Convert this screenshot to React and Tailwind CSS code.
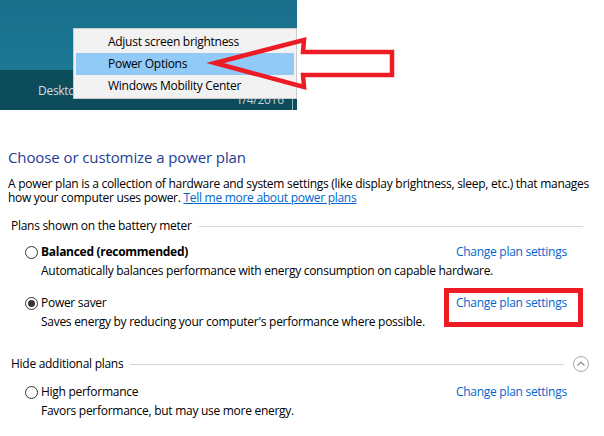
import React from "react";

const FONT = { fontFamily: '"Segoe UI", "Open Sans", "Noto Sans", sans-serif' };

/* ── Radio (Win10 look) ── */
const Radio = ({ checked = false }) => (
  <span className="flex h-[13px] w-[13px] shrink-0 items-center justify-center rounded-full border border-[#333333] bg-white">
    {checked && <span className="h-[7px] w-[7px] rounded-full bg-[#333333]" />}
  </span>
);

const LINK = "text-[#0066cc] cursor-pointer";

const SectionHeader = ({ label, width, chevron }) => (
  <div className={`flex h-[20px] items-center pl-[3px] ${width}`}>
    <span className="text-[12px] text-black">{label}</span>
    <span className="ml-[7px] h-px flex-1 bg-[#d5d5d5]" />
    {chevron && (
      <svg width="18" height="18" viewBox="0 0 18 18" className="ml-[8px]">
        <circle cx="9" cy="9" r="7.5" fill="white" stroke="#a8a8a8" strokeWidth="1" />
        <path d="M5.5 10.5 L9 7 L12.5 10.5" fill="none" stroke="#8c8c8c" strokeWidth="1.2" />
      </svg>
    )}
  </div>
);

const Plan = ({ name, bold, checked, desc, className = "" }) => (
  <div className={`pl-[17px] ${className}`}>
    <div className="flex h-[20px] items-center">
      <div className="flex w-[431px] items-center gap-[3px]">
        <Radio checked={checked} />
        <span className={`text-[12px] text-black ${bold ? "font-bold" : ""}`}>{name}</span>
      </div>
      <span className={`text-[12px] ${LINK}`}>Change plan settings</span>
    </div>
    <div className="flex h-[18px] items-center pl-[16px] text-[12px] text-black">{desc}</div>
  </div>
);

export default function App() {
  return (
    <div className="relative h-[436px] w-[604px] overflow-hidden bg-white tracking-[-0.28px]" style={FONT}>
      {/* Screenshot of the desktop context menu */}
      <div className="relative h-[110px] w-[297px] overflow-hidden">
        <div className="h-[70px] bg-gradient-to-b from-[#1a6f8b] to-[#1b7893]" />
        <div className="relative h-[40px] bg-[#0c4c5b]">
          <span className="absolute left-[38px] top-[12px] text-[12px] text-[#d4dde0]">Desktop</span>
          <span className="absolute left-[236px] top-[21px] text-[12px] text-[#c5d1d5]">1/4/2016</span>
          <span className="absolute left-[292px] top-0 h-full w-px bg-[#8fb0b9]" />
        </div>
        <div className="absolute left-[73px] top-[28px] h-[71px] w-[224px] border border-[#cbcbcb] bg-[#f2f2f2] px-[2px] pt-[2px] text-[12px] text-black">
          <div className="flex h-[22px] items-center pl-[32px]">Adjust screen brightness</div>
          <div className="flex h-[22px] items-center bg-[#91c9f7] pl-[32px]">Power Options</div>
          <div className="flex h-[22px] items-center pl-[32px]">Windows Mobility Center</div>
        </div>
      </div>

      {/* Red callout arrow */}
      <svg className="absolute left-0 top-0" width="604" height="110">
        <polygon
          points="215,63 304,40 303,52 392,52 392,75 303,75 304,87"
          fill="none"
          stroke="#ed1c24"
          strokeWidth="4.5"
          strokeLinejoin="miter"
        />
      </svg>

      {/* Power options page */}
      <div className="pl-[8px] pt-[36px]">
        <h1 className="flex h-[22px] items-center text-[15px] font-normal tracking-[-0.1px] text-[#1e3c96]">
          Choose or customize a power plan
        </h1>
        <p className="mt-[9px] w-[596px] whitespace-nowrap text-[12px] leading-[14px] text-black">
          A power plan is a collection of hardware and system settings (like display brightness, sleep, etc.) that manages
          <br />
          how your computer uses power. <span className={`${LINK} underline`}>Tell me more about power plans</span>
        </p>

        <div className="mt-[11px]">
          <SectionHeader label="Plans shown on the battery meter" width="w-[575px]" />
        </div>
        <Plan className="mt-[6px]" name="Balanced (recommended)" bold desc="Automatically balances performance with energy consumption on capable hardware." />
        <Plan className="mt-[13px]" name="Power saver" checked desc="Saves energy by reducing your computer's performance where possible." />

        <div className="mt-[23px]">
          <SectionHeader label="Hide additional plans" width="w-[582px]" chevron />
        </div>
        <Plan className="mt-[8px]" name="High performance" desc="Favors performance, but may use more energy." />
      </div>

      {/* Red highlight box */}
      <div className="absolute left-[444px] top-[288px] h-[39px] w-[139px] border-[5px] border-[#ed1c24]" />
    </div>
  );
}
